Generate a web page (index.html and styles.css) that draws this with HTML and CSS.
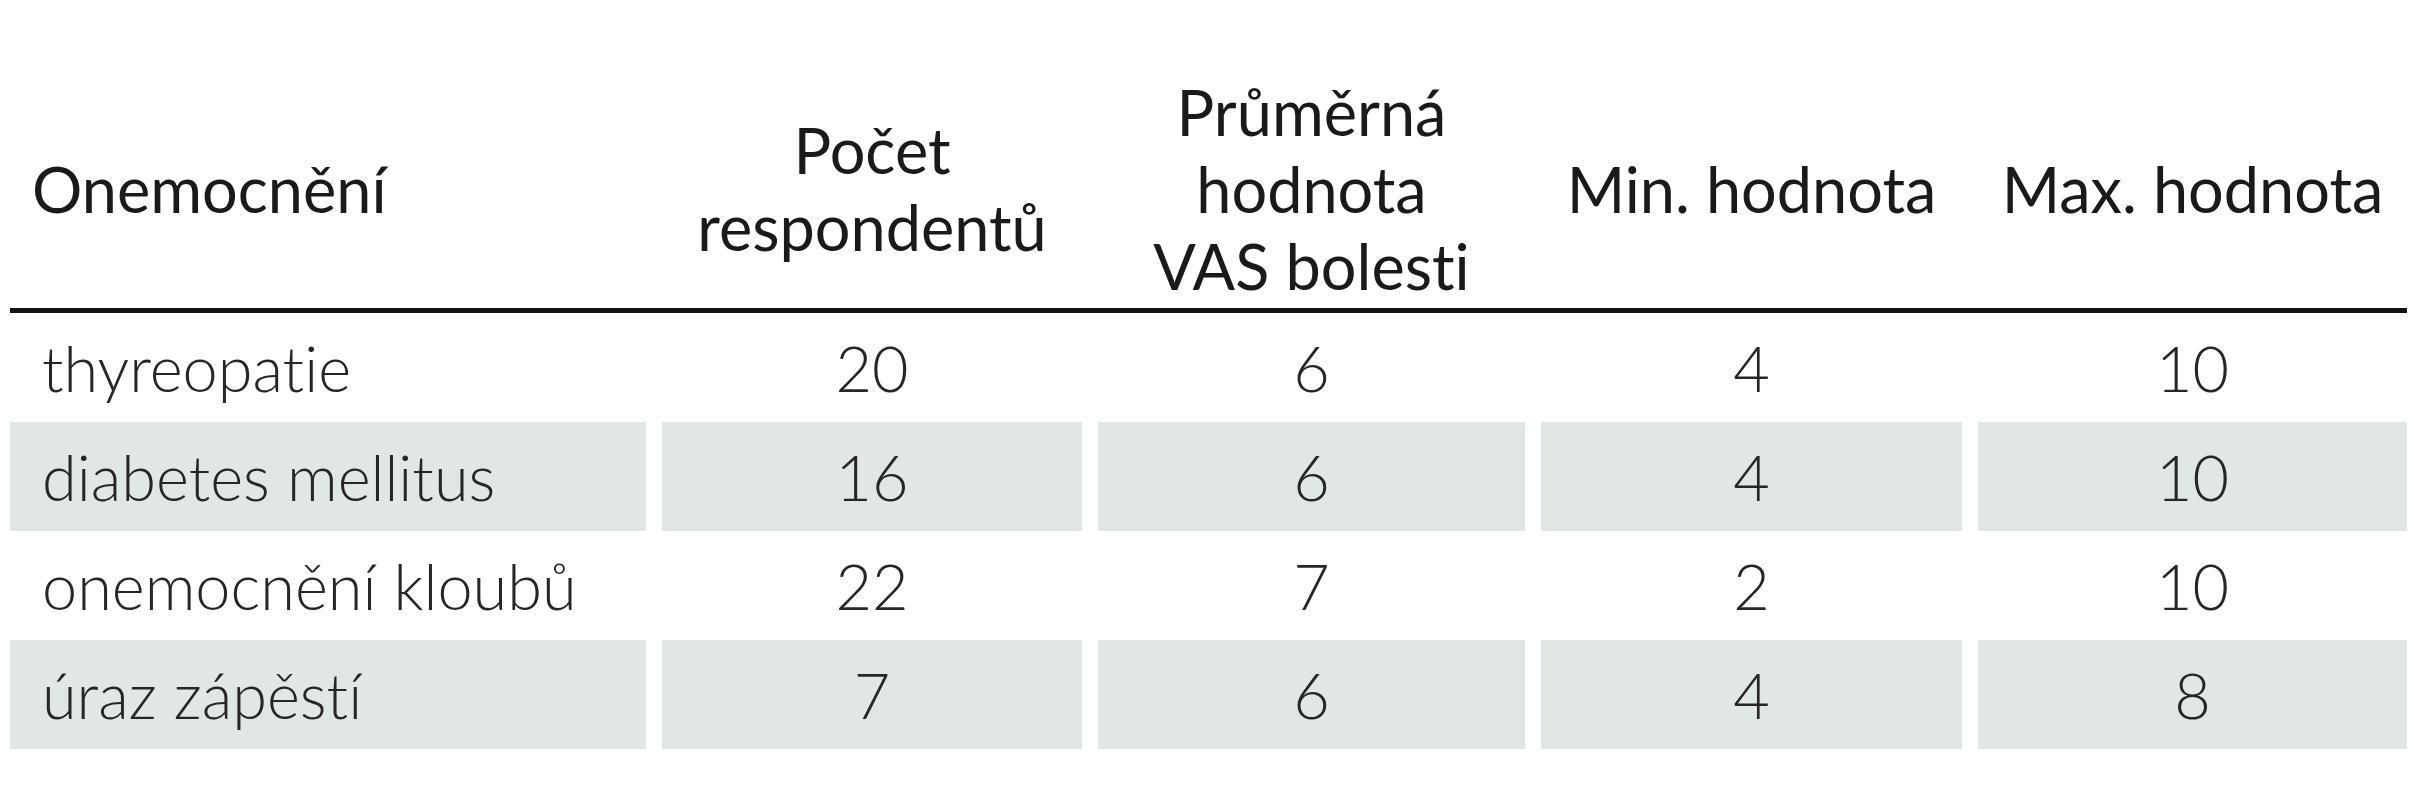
FILE: index.html
```html
<!DOCTYPE html>
<html lang="cs">
<head>
<meta charset="utf-8">
<title>Tabulka – VAS bolesti</title>
<link rel="stylesheet" href="styles.css">
</head>
<body>
<table class="vas">
  <colgroup>
    <col class="c-name">
    <col class="c-count">
    <col class="c-avg">
    <col class="c-min">
    <col class="c-max">
  </colgroup>
  <thead>
    <tr class="head">
      <th class="name">Onemocnění</th>
      <th>Počet<br>respondentů</th>
      <th>Průměrná<br>hodnota<br>VAS bolesti</th>
      <th>Min. hodnota</th>
      <th>Max. hodnota</th>
    </tr>
    <tr class="rule"><td colspan="5"></td></tr>
  </thead>
  <tbody>
    <tr>
      <td class="name">thyreopatie</td><td>20</td><td>6</td><td>4</td><td>10</td>
    </tr>
    <tr class="alt">
      <td class="name">diabetes mellitus</td><td>16</td><td>6</td><td>4</td><td>10</td>
    </tr>
    <tr>
      <td class="name">onemocnění kloubů</td><td>22</td><td>7</td><td>2</td><td>10</td>
    </tr>
    <tr class="alt">
      <td class="name">úraz zápěstí</td><td>7</td><td>6</td><td>4</td><td>8</td>
    </tr>
  </tbody>
</table>
</body>
</html>
```

FILE: styles.css
```css
html, body {
  margin: 0;
  padding: 0;
  background: #ffffff;
}

body {
  font-family: Lato, "Open Sans", "Liberation Sans", sans-serif;
  font-size: 63px;
  font-weight: 300;
  line-height: 77px;
  color: #262626;
  font-variant-ligatures: none;
  font-feature-settings: "liga" 0, "clig" 0;
}

.vas {
  table-layout: fixed;
  border-collapse: separate;
  border-spacing: 16px 0;
  margin: 68px 0 0 -6px;
}

.c-name { width: 636px; }
.c-count { width: 420px; }
.c-avg { width: 427px; }
.c-min { width: 421px; }
.c-max { width: 429px; }

.vas th,
.vas td {
  padding: 0;
  text-align: center;
  vertical-align: middle;
  white-space: nowrap;
}

.head th {
  height: 240px;
  font-weight: 400;
  color: #1a1a1a;
}

.head th.name {
  text-align: left;
  padding-left: 22px;
}

.rule td {
  height: 5px;
  line-height: 0;
  font-size: 0;
  background: #141414;
}

.vas tbody td {
  height: 109px;
}

.vas tbody td.name {
  text-align: left;
  padding-left: 32px;
}

.vas tbody tr.alt td {
  background: #e1e7e7;
}
```
